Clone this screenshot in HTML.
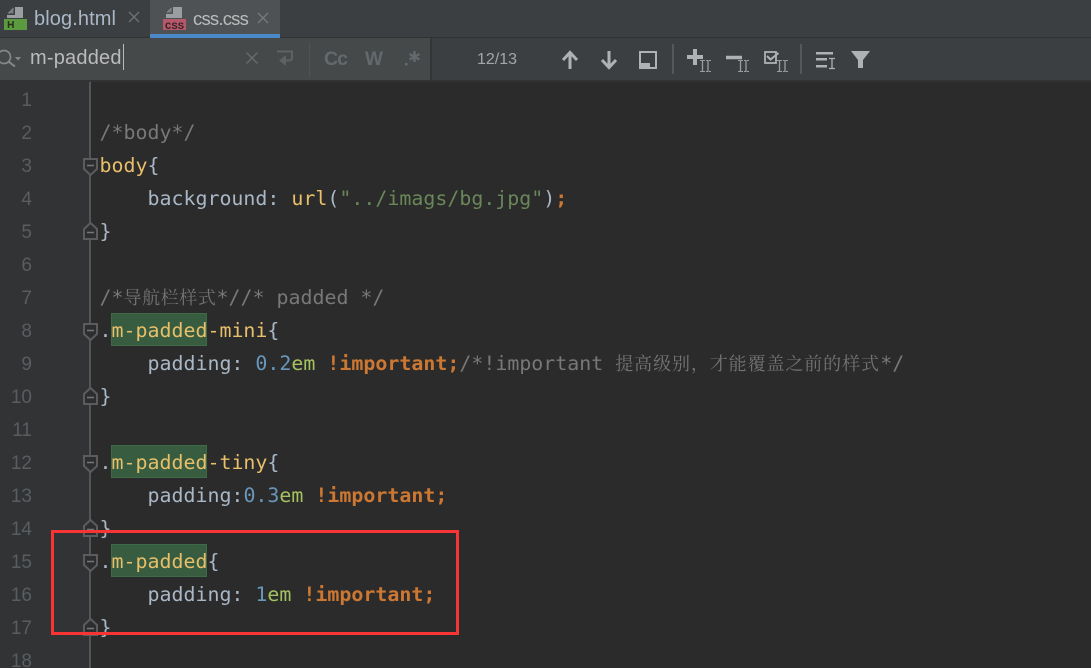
<!DOCTYPE html>
<html><head><meta charset="utf-8"><style>
html,body{margin:0;padding:0;width:1091px;height:668px;overflow:hidden;background:#2b2b2b}
#p{position:absolute;left:0;top:0;width:1091px;height:668px;overflow:hidden;background:#2b2b2b;font-family:"DejaVu Sans Mono","Liberation Mono",monospace}
div{position:absolute}
.l{left:99.500px;height:33px;line-height:33px;font-size:19.930px;white-space:pre;color:#a9b7c6;font-weight:400}
.n{left:0;width:32px;text-align:right;height:33px;line-height:33px;font-size:19px;color:#5a5d60;font-family:"Liberation Sans",sans-serif}
.c{color:#787878}.y{color:#e8bf6a}.o{color:#cc7832;font-weight:700;letter-spacing:0}.b{color:#6897bb}.g{color:#a5c261}.s{color:#6a8759}
.h{left:111px;width:96px;height:33px;background:#375c3f;box-shadow:inset 0 0 0 1px #3f6a47}
.cj{display:inline-block;font-family:"Noto Serif CJK SC",serif;font-size:18px;letter-spacing:1px;line-height:20px;color:#747474}
.ui{font-family:"Liberation Sans",sans-serif;white-space:pre}
svg{position:absolute;overflow:hidden}
</style></head><body><div id="p">
<div style="left:0;top:0;width:1091px;height:38px;background:#3c3f41"></div>
<div style="left:150px;top:0;width:130px;height:34px;background:#4e5254"></div>
<div style="left:150px;top:34px;width:130px;height:4px;background:#4a88c7"></div>
<div style="left:0;top:37px;width:150px;height:1px;background:#323232"></div>
<div style="left:280px;top:37px;width:811px;height:1px;background:#323232"></div>
<svg style="left:0;top:0" width="290" height="38">
<path d="M7 18V14L14 7h9v11z" fill="#9a9ea1"/><path d="M8 14h6V8z" fill="#75797b"/><path d="M7 15h8V7h-1.500v6.500H7z" fill="#3c3f41"/>
<rect x="4" y="19" width="23" height="11" fill="#5c9a3f"/>
<path d="M8.500 21v7M13 21v7M8.500 24.500h4.500" stroke="#24331c" stroke-width="1.500" fill="none"/>
<path d="M129 12l10 10M139 12l-10 10" stroke="#6f7375" stroke-width="1.300"/>
<path d="M166 18V13L172 7h10v11z" fill="#9a9ea1"/><path d="M167 13h5V8z" fill="#75797b"/><path d="M166 14h7V7h-1.500v5.500H166z" fill="#4e5254"/>
<rect x="163" y="19" width="23" height="11" fill="#b5596a"/>
<text x="165" y="29" font-family="Liberation Mono" font-size="10.500" font-weight="700" fill="#3a2328" textLength="19">CSS</text>
<path d="M258 13l10 10M268 13l-10 10" stroke="#767a7c" stroke-width="1.300"/>
</svg>
<div class="ui" style="left:34px;top:6px;font-size:20px;line-height:26px;color:#a9b7c6;letter-spacing:.1px">blog.html</div>
<div class="ui" style="left:193px;top:6px;font-size:18.500px;line-height:26px;color:#bbbbbb;letter-spacing:-.800px">css.css</div>

<div style="left:0;top:38px;width:1091px;height:42px;background:#3c3f41"></div>
<div style="left:0;top:38px;width:430px;height:42px;background:#45494a"></div>
<div style="left:430px;top:38px;width:2px;height:42px;background:#323537"></div>
<div style="left:0;top:80px;width:1091px;height:2px;background:#313335"></div>
<div style="left:309px;top:42px;width:1px;height:36px;background:#505354"></div>
<svg style="left:0;top:0" width="440" height="82">
<circle cx="4" cy="57" r="6.500" fill="none" stroke="#85898b" stroke-width="1.700"/><path d="M9 62l6 4.500" stroke="#85898b" stroke-width="2"/><path d="M15 57h6l-3 3.500z" fill="#85898b"/>
<path d="M246.500 52.500l11 11M257.500 52.500l-11 11" stroke="#666a6c" stroke-width="1.500"/>
<path d="M277 51.500h15v6q0 3-3 3h-8" fill="none" stroke="#5e6264" stroke-width="2"/><path d="M286 55v11l-7-5.500z" fill="#5e6264"/>
<text x="324" y="65" font-family="Liberation Sans" font-size="19.500" font-weight="700" fill="#63696d" letter-spacing="-1">Cc</text>
<text x="365" y="65" font-family="Liberation Sans" font-size="19" font-weight="700" fill="#63696d">W</text>
<rect x="405" y="63" width="2.500" height="2.500" fill="#63696d"/>
<path d="M414.500 51v11M409.500 54l10 5.500M419.500 54l-10 5.500" stroke="#63696d" stroke-width="2.400" fill="none"/>
</svg>
<div class="ui" style="left:30px;top:44px;font-size:20px;line-height:28px;color:#bbbbbb;letter-spacing:.2px">m-padded</div>
<div style="left:123px;top:44px;width:1px;height:26px;background:#bbbbbb"></div>
<div class="ui" style="left:477px;top:50px;font-size:16px;line-height:20px;color:#a3a7a9">12/13</div>
<svg style="left:0;top:0" width="1091" height="82">
<g fill="none" stroke="#afb1b3" stroke-width="3">
<path d="M570 69V53M563 60l7-7.500 7 7.500"/>
<path d="M609 51v16M602 60l7 7.500 7-7.500"/>
</g>
<rect x="640" y="52" width="16" height="16" fill="none" stroke="#afb1b3" stroke-width="2"/>
<rect x="640" y="63" width="10" height="6" fill="#afb1b3"/>
<rect x="672" y="44" width="2" height="30" fill="#55585a"/>
<rect x="800" y="44" width="2" height="30" fill="#55585a"/>
<path d="M687 57h16M695 49v16" stroke="#afb1b3" stroke-width="4"/>
<path d="M726 57.500h16" stroke="#afb1b3" stroke-width="3.500"/>
<g fill="none" stroke="#9a9c9e" stroke-width="1.100" stroke-dasharray="2 1">
<path d="M700 60.500h11M700 71.500h11M738 60.500h11M738 71.500h11M777 60.500h11M777 71.500h11"/>
</g>
<g fill="none" stroke="#9a9c9e" stroke-width="1.300">
<path d="M702.500 60v12M708 60v12M740.500 60v12M746 60v12M779.500 60v12M785 60v12"/>
</g>
<rect x="765" y="52" width="11" height="11" fill="none" stroke="#afb1b3" stroke-width="1.800"/>
<path d="M767 56l3.500 3.500 8-6.500" fill="none" stroke="#afb1b3" stroke-width="2"/>
<g fill="#afb1b3"><rect x="816" y="52" width="17" height="2.500"/><rect x="816" y="58" width="11" height="2.500"/><rect x="816" y="65" width="11" height="2.500"/></g>
<path d="M829 58.500h6M829 68.500h6M832 58v11" stroke="#afb1b3" stroke-width="1.300" fill="none"/>
<path d="M851 51h19l-7 9v8h-5v-8z" fill="#afb1b3"/>
</svg>

<div style="left:0;top:82px;width:90px;height:586px;background:#313335"></div>
<div style="left:89px;top:82px;width:2px;height:586px;background:#555"></div>

<div class="n" style="top:84px">1</div><div class="n" style="top:117px">2</div><div class="n" style="top:150px">3</div><div class="n" style="top:183px">4</div><div class="n" style="top:216px">5</div><div class="n" style="top:249px">6</div><div class="n" style="top:282px">7</div><div class="n" style="top:315px">8</div><div class="n" style="top:348px">9</div><div class="n" style="top:381px">10</div><div class="n" style="top:414px">11</div><div class="n" style="top:447px">12</div><div class="n" style="top:480px">13</div><div class="n" style="top:513px">14</div><div class="n" style="top:546px">15</div><div class="n" style="top:579px">16</div><div class="n" style="top:612px">17</div><div class="n" style="top:645px">18</div>

<div class="h" style="top:313px"></div><div class="h" style="top:445px"></div><div class="h" style="top:544px"></div>

<svg style="left:0;top:0" width="110" height="668">
<g fill="#2d2e2f" stroke="#5a5c5e" stroke-width="2">
<path d="M84 159h13v10l-6.500 6-6.500-6z"/><path d="M84 324h13v10l-6.500 6-6.500-6z"/><path d="M84 456h13v10l-6.500 6-6.500-6z"/><path d="M84 555h13v10l-6.500 6-6.500-6z"/>
<path d="M84 239h13v-10l-6.500-6-6.500 6z"/><path d="M84 404h13v-10l-6.500-6-6.500 6z"/><path d="M84 536h13v-10l-6.500-6-6.500 6z"/><path d="M84 635h13v-10l-6.500-6-6.500 6z"/>
</g>
<g stroke="#75777a" stroke-width="1.500">
<path d="M87 165.500h7M87 330.500h7M87 462.500h7M87 561.500h7M87 232.500h7M87 397.500h7M87 529.500h7M87 628.500h7"/>
</g>
</svg>

<div class="l c" style="top:116px">/*body*/</div>
<div class="l" style="top:149px"><span class="y">body</span>{</div>
<div class="l" style="top:182px">    background: <span class="y">url</span>(<span class="s">"../imags/bg.jpg"</span>)<span class="o">;</span></div>
<div class="l" style="top:215px">}</div>
<div class="l c" style="top:281px">/*<span class="cj" style="width:93px;letter-spacing:.6px">导航栏样式</span>*//* padded */</div>
<div class="l" style="top:314px">.<span class="y">m-padded-mini</span>{</div>
<div class="l" style="top:347px">    padding: <span class="b">0.2</span><span class="g">em</span> <span class="o">!important;</span><span class="c">/*!important </span><span class="cj" style="width:265px;font-size:18px;letter-spacing:.9px">提高级别，才能覆盖之前的样式</span><span class="c">*/</span></div>
<div class="l" style="top:380px">}</div>
<div class="l" style="top:446px">.<span class="y">m-padded-tiny</span>{</div>
<div class="l" style="top:479px">    padding:<span class="b">0.3</span><span class="g">em</span> <span class="o">!important;</span></div>
<div class="l" style="top:512px">}</div>
<div class="l" style="top:545px">.<span class="y">m-padded</span>{</div>
<div class="l" style="top:578px">    padding: <span class="b">1</span><span class="g">em</span> <span class="o">!important;</span></div>
<div class="l" style="top:611px">}</div>

<div style="left:51px;top:530px;width:402px;height:99px;border:3px solid #f93434"></div>
</div></body></html>
